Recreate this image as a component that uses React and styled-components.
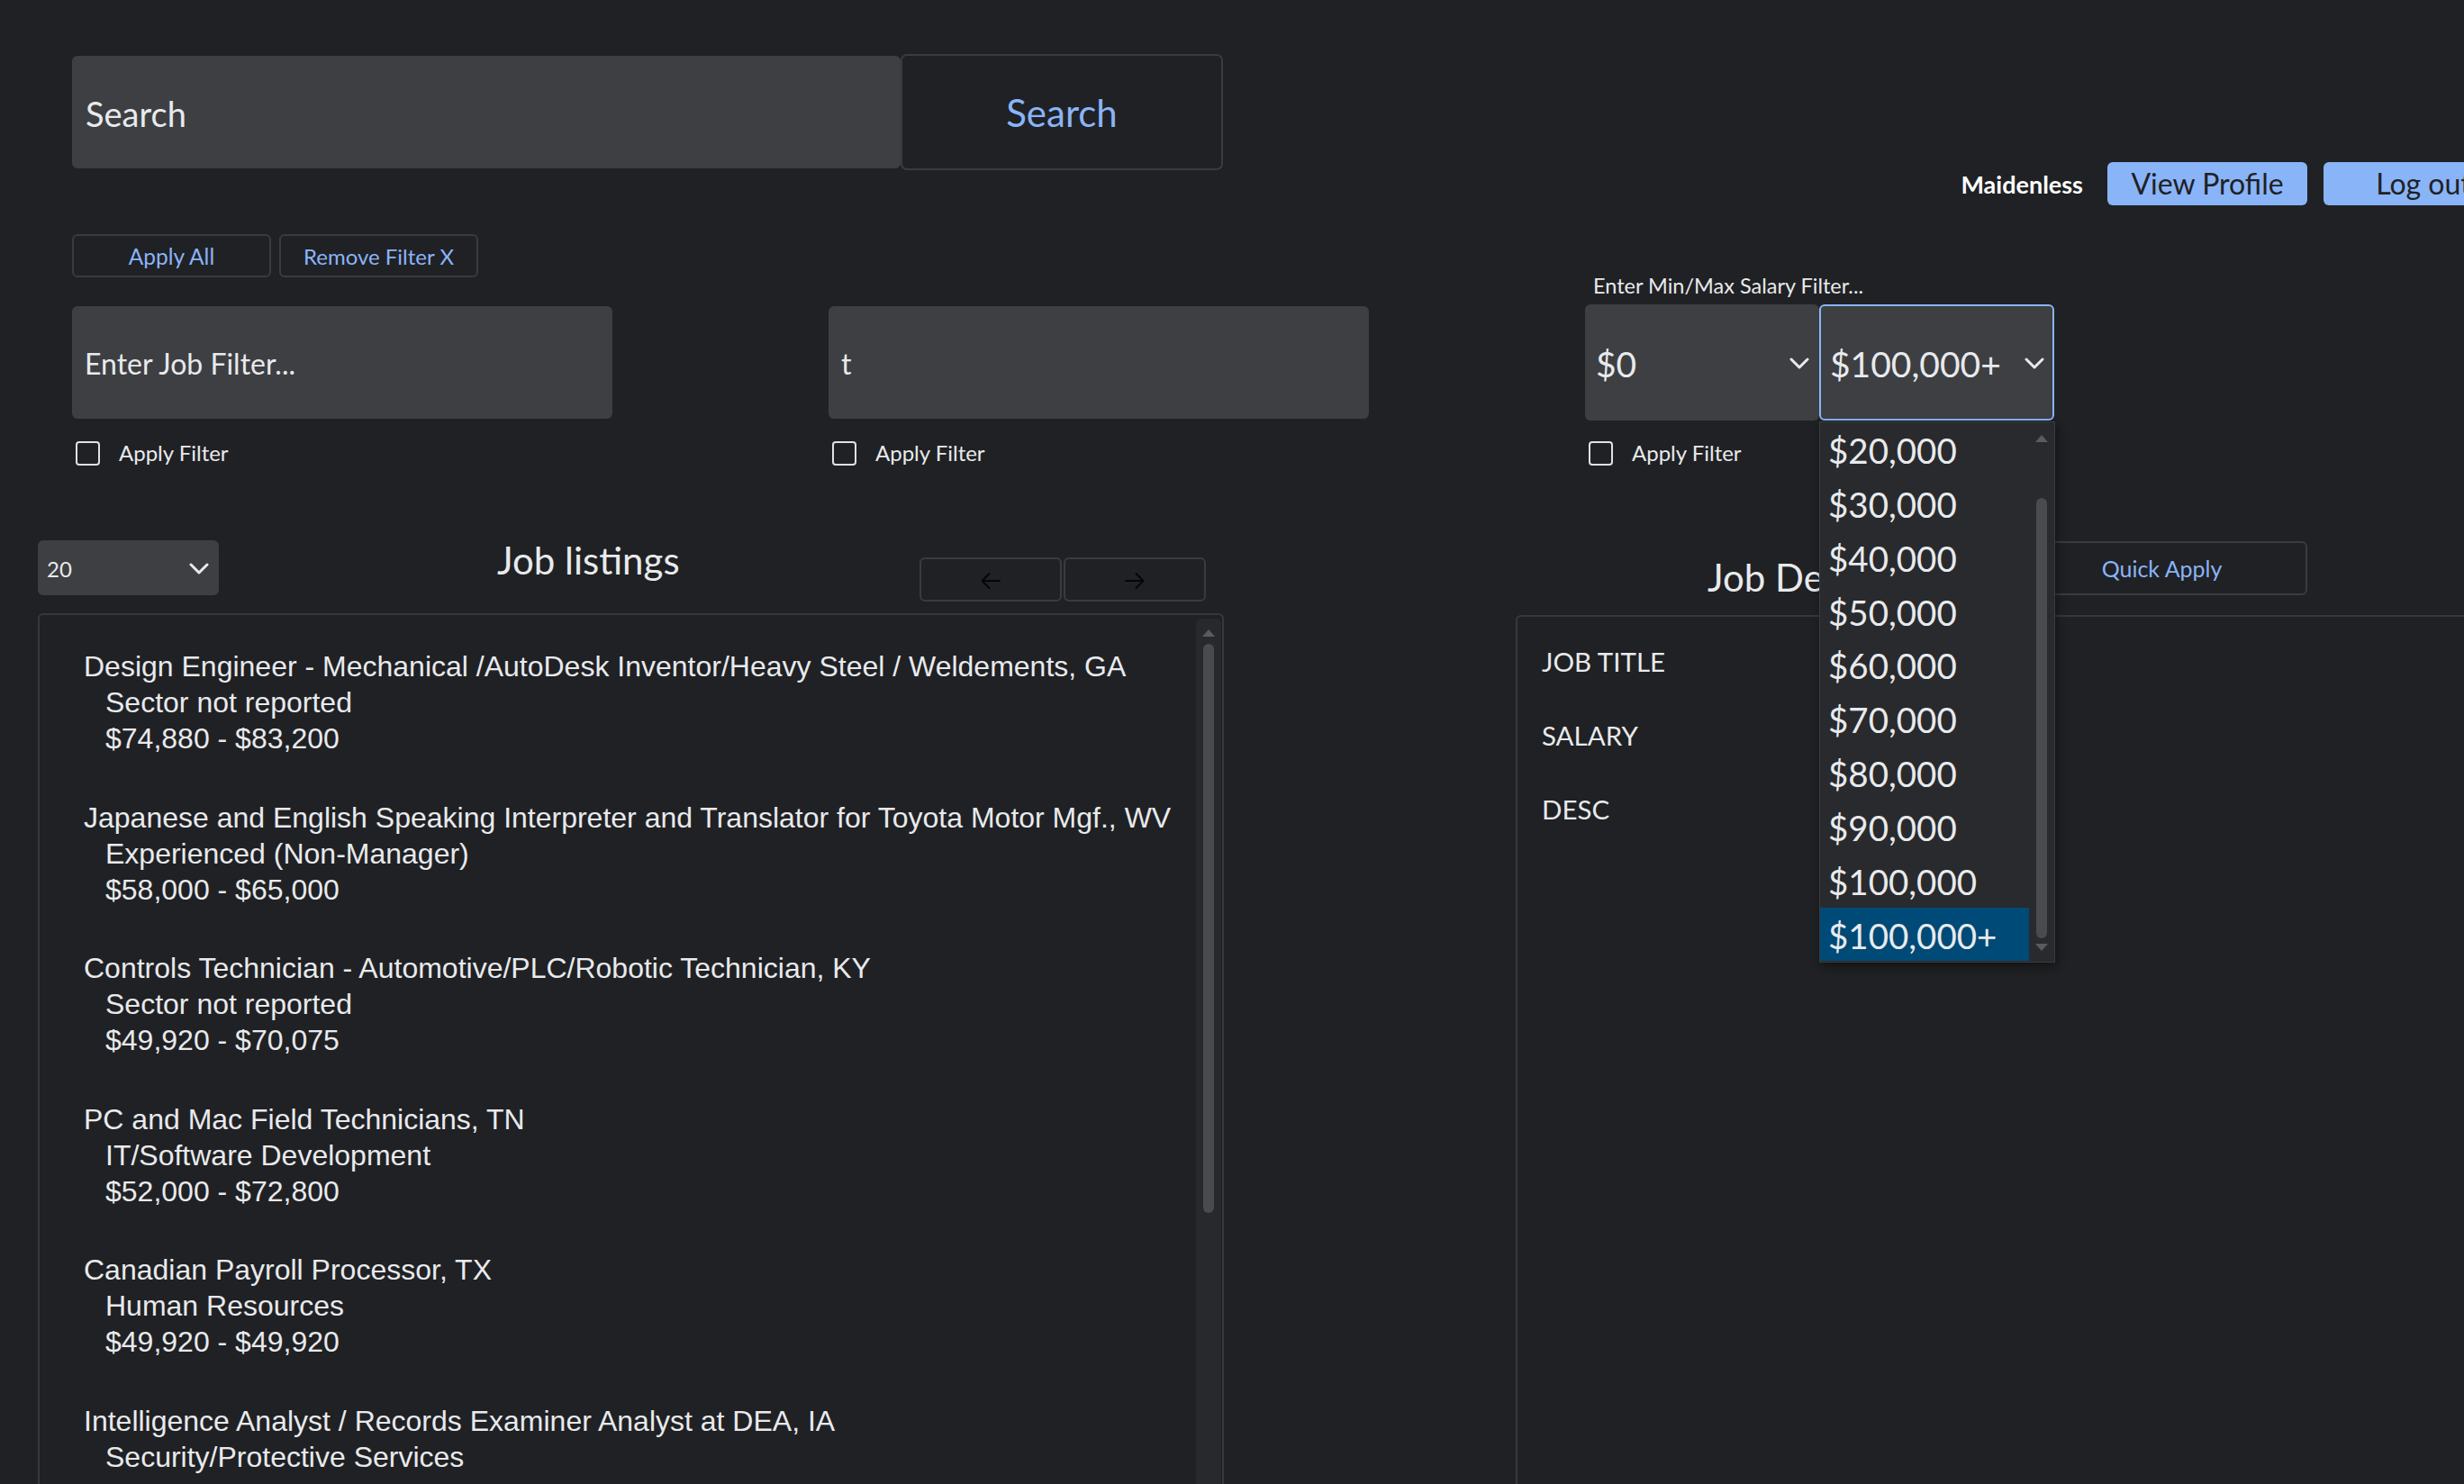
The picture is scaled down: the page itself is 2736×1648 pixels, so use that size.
import React from "react";
import styled, { createGlobalStyle } from "styled-components";

const UI = `Lato, "Noto Sans", sans-serif`;
const ARIAL = `"Liberation Sans", Arial, sans-serif`;

const GlobalStyle = createGlobalStyle`
  html, body { margin: 0; padding: 0; background: #202124; overflow: hidden; }
  body { font-family: ${UI}; color: #e8eaed; }
  * { box-sizing: border-box; }
`;

const Page = styled.div`
  width: 2802px;
  height: 1648px;
  overflow: hidden;
  font-family: ${UI};
  color: #e8eaed;
`;

/* ---------- header ---------- */
const Header = styled.header`
  display: flex;
  align-items: flex-start;
`;

const SearchForm = styled.form`
  display: flex;
  align-items: center;
  margin: 60px 0 0 80px;
`;

const SearchInput = styled.input`
  width: 920px;
  height: 125px;
  padding: 2px 15px 0;
  background: #3e3f42;
  border: none;
  border-radius: 6px;
  outline: none;
  color: #e8eaed;
  font: 400 38px ${UI};
  &::placeholder { color: #e8eaed; opacity: 1; }
`;

const SearchButton = styled.button`
  width: 358px;
  height: 129px;
  background: #202124;
  border: 2px solid #3a3b3e;
  border-radius: 7px;
  color: #8ab4f8;
  font: 400 42px ${UI};
`;

const UserNav = styled.nav`
  display: flex;
  align-items: center;
  margin: 180px 0 0 auto;
`;

const UserName = styled.span`
  font: 700 27px ${UI};
  color: #ffffff;
  margin-right: 27px;
`;

const NavButton = styled.button`
  width: 222px;
  height: 48px;
  background: #8ab4f8;
  color: #202124;
  border: none;
  border-radius: 6px;
  font: 400 32px ${UI};
  line-height: 48px;
  padding: 0;
  & + & { margin-left: 18px; }
`;

/* ---------- filters ---------- */
const FilterActions = styled.div`
  display: flex;
  gap: 9px;
  margin: 32px 0 0 80px;
`;

const OutlineButton = styled.button`
  width: ${(p) => p.$w || 221}px;
  height: ${(p) => p.$h || 48}px;
  padding: 0;
  background: transparent;
  border: 2px solid #3a3b3e;
  border-radius: 6px;
  color: #8ab4f8;
  font: 400 ${(p) => p.$fs || 24.5}px ${UI};
`;

const FilterGrid = styled.div`
  display: grid;
  grid-template-columns: 840px 840px 600px;
  align-items: end;
  margin: -3px 0 0 80px;
`;

const FilterColumn = styled.div`
  display: flex;
  flex-direction: column;
`;

const FilterInput = styled.input`
  width: 600px;
  height: 125px;
  margin-bottom: 2px;
  padding: 2px 14px 0;
  background: #3e3f42;
  border: none;
  border-radius: 6px;
  outline: none;
  color: #e8eaed;
  font: 400 32px ${UI};
  &::placeholder { color: #e8eaed; opacity: 1; }
`;

const CheckRow = styled.label`
  display: flex;
  align-items: center;
  height: 28px;
  margin-top: 22px;
  padding-left: 4px;
  font: 400 24px ${UI};
  line-height: 28px;
`;

const CheckBox = styled.span`
  width: 27px;
  height: 27px;
  border: 2.5px solid #dfe1e5;
  border-radius: 4px;
  margin-right: 21px;
`;

const SalaryLabel = styled.div`
  font: 400 23.5px ${UI};
  line-height: 24px;
  margin: 0 0 9px 9px;
`;

const SalaryRow = styled.div`
  display: flex;
`;

const SelectWrap = styled.div`
  position: relative;
`;

const SelectBox = styled.div`
  display: flex;
  align-items: center;
  justify-content: space-between;
  width: ${(p) => p.$w}px;
  height: ${(p) => p.$h}px;
  padding: 2px 9px 0 ${(p) => p.$pl || 10}px;
  background: #3e3f42;
  border: 2px solid ${(p) => (p.$focused ? "#8ab4f8" : "transparent")};
  border-radius: 6px;
  color: #e8eaed;
  font: 400 ${(p) => p.$fs}px ${UI};
`;

const Popup = styled.div`
  position: absolute;
  top: calc(100% + 1px);
  left: 0;
  width: 262px;
  height: 601px;
  display: flex;
  background: #292a2d;
  border: 1px solid #3a3b3e;
  box-shadow: 2px 4px 10px rgba(0, 0, 0, 0.45);
  z-index: 10;
`;

const OptionList = styled.ul`
  flex: 1;
  list-style: none;
  margin: 0;
  padding: 0;
`;

const Option = styled.li`
  height: 59.85px;
  overflow: hidden;
  padding-left: 9px;
  font: 400 38.5px ${UI};
  line-height: 63px;
  color: #e8eaed;
  background: ${(p) => (p.$selected ? "#004a77" : "transparent")};
`;

const ScrollTrack = styled.div`
  display: flex;
  flex-direction: column;
  align-items: center;
  width: 28px;
  padding: ${(p) => p.$pad || "12px 0 0"};
  background: ${(p) => p.$bg || "transparent"};
  border-radius: 6px 6px 0 0;
`;

const TriUp = styled.span`
  width: 0;
  height: 0;
  border-left: 7px solid transparent;
  border-right: 7px solid transparent;
  border-bottom: 8px solid #5a5b5e;
`;

const TriDown = styled(TriUp)`
  border-bottom: none;
  border-top: 8px solid #5a5b5e;
  margin-top: auto;
`;

const Thumb = styled.span`
  width: 12px;
  height: ${(p) => p.$h}px;
  margin-top: ${(p) => p.$mt}px;
  background: #4a4b4e;
  border-radius: 6px;
`;

/* ---------- main ---------- */
const Main = styled.main`
  display: flex;
  align-items: flex-start;
  margin-top: 79px;
`;

const LeftCol = styled.section`
  width: 1317px;
  margin-left: 42px;
`;

const ListHeader = styled.div`
  display: flex;
  align-items: flex-start;
  height: 85px;
`;

const Heading = styled.h2`
  margin: ${(p) => p.$m || "0"};
  font: 400 42px ${UI};
  line-height: 1.2;
  color: #e8eaed;
`;

const ArrowGroup = styled.div`
  display: flex;
  gap: 2px;
  margin: 23px 20px 0 auto;
`;

const ArrowButton = styled.button`
  display: flex;
  align-items: center;
  justify-content: center;
  width: 158px;
  height: 49px;
  padding: 2px 0 0;
  background: transparent;
  border: 2px solid #3a3b3e;
  border-radius: 6px;
`;

const ListBox = styled.div`
  display: flex;
  height: 1000px;
  border: 2px solid #37383b;
  border-bottom: none;
  border-radius: 6px 6px 0 0;
`;

const ListContent = styled.div`
  flex: 1;
  padding: 37px 0 0 49px;
  font: 400 32px ${ARIAL};
  line-height: 40px;
  color: #e8eaed;
`;

const JobItem = styled.div`
  margin-bottom: 47.5px;
`;

const JobLine = styled.div`
  padding-left: ${(p) => (p.$sub ? 24 : 0)}px;
  white-space: nowrap;
`;

const RightCol = styled.section`
  flex: 1;
  margin-left: 324px;
`;

const DetailsHeader = styled.div`
  display: flex;
  align-items: flex-start;
  height: 86.6px;
`;

const QuickApply = styled(OutlineButton)`
  margin: 5px 240px 0 auto;
`;

const DetailsBox = styled.div`
  height: 1000px;
  padding: 9px 27px 0;
  border: 2px solid #37383b;
  border-right: none;
  border-bottom: none;
  border-radius: 6px 0 0 0;
`;

const DetailRow = styled.div`
  height: 82px;
  font: 400 29.5px ${UI};
  line-height: 82px;
  color: #e8eaed;
`;

/* ---------- icons ---------- */
const Chevron = ({ w = 22 }) => (
  <svg width={w} height={Math.round(w * 0.6)} viewBox="0 0 22 13" fill="none" stroke="#e8eaed" strokeWidth="3" strokeLinecap="round" strokeLinejoin="round">
    <polyline points="2,2 11,11 20,2" />
  </svg>
);

const Arrow = ({ dir }) => (
  <svg width="22" height="18" viewBox="0 0 22 18" fill="none" stroke="#050505" strokeWidth="1.8" strokeLinecap="round" strokeLinejoin="round" style={{ transform: dir === "right" ? "scaleX(-1)" : "none" }}>
    <path d="M21 9H1.5M9.5 1L1.5 9l8 8" />
  </svg>
);

const jobs = [
  ["Design Engineer - Mechanical /AutoDesk Inventor/Heavy Steel / Weldements, GA", "Sector not reported", "$74,880 - $83,200"],
  ["Japanese and English Speaking Interpreter and Translator for Toyota Motor Mgf., WV", "Experienced (Non-Manager)", "$58,000 - $65,000"],
  ["Controls Technician - Automotive/PLC/Robotic Technician, KY", "Sector not reported", "$49,920 - $70,075"],
  ["PC and Mac Field Technicians, TN", "IT/Software Development", "$52,000 - $72,800"],
  ["Canadian Payroll Processor, TX", "Human Resources", "$49,920 - $49,920"],
  ["Intelligence Analyst / Records Examiner Analyst at DEA, IA", "Security/Protective Services", ""],
];

const salaryOptions = ["$20,000", "$30,000", "$40,000", "$50,000", "$60,000", "$70,000", "$80,000", "$90,000", "$100,000", "$100,000+"];

export default function App() {
  return (
    <Page>
      <GlobalStyle />
      <Header>
        <SearchForm onSubmit={(e) => e.preventDefault()}>
          <SearchInput placeholder="Search" />
          <SearchButton type="button">Search</SearchButton>
        </SearchForm>
        <UserNav>
          <UserName>Maidenless</UserName>
          <NavButton>View Profile</NavButton>
          <NavButton>Log out</NavButton>
        </UserNav>
      </Header>

      <FilterActions>
        <OutlineButton>Apply All</OutlineButton>
        <OutlineButton $fs={24}>Remove Filter X</OutlineButton>
      </FilterActions>

      <FilterGrid>
        <FilterColumn>
          <FilterInput placeholder="Enter Job Filter..." />
          <CheckRow><CheckBox />Apply Filter</CheckRow>
        </FilterColumn>
        <FilterColumn>
          <FilterInput defaultValue="t" />
          <CheckRow><CheckBox />Apply Filter</CheckRow>
        </FilterColumn>
        <FilterColumn>
          <SalaryLabel>Enter Min/Max Salary Filter...</SalaryLabel>
          <SalaryRow>
            <SelectBox $w={260} $h={129} $fs={39}>
              <span>$0</span>
              <Chevron />
            </SelectBox>
            <SelectWrap>
              <SelectBox $w={261} $h={129} $fs={39} $focused>
                <span>$100,000+</span>
                <Chevron />
              </SelectBox>
              <Popup>
                <OptionList>
                  {salaryOptions.map((o, i) => (
                    <Option key={o} $selected={i === salaryOptions.length - 1}>{o}</Option>
                  ))}
                </OptionList>
                <ScrollTrack $pad="14px 0 12px">
                  <TriUp />
                  <Thumb $mt={62} $h={489} />
                  <TriDown />
                </ScrollTrack>
              </Popup>
            </SelectWrap>
          </SalaryRow>
          <CheckRow><CheckBox />Apply Filter</CheckRow>
        </FilterColumn>
      </FilterGrid>

      <Main>
        <LeftCol>
          <ListHeader>
            <SelectBox $w={201} $h={61} $fs={24} $pl={8} style={{ marginTop: 4 }}>
              <span>20</span>
              <Chevron />
            </SelectBox>
            <Heading $m="1px 0 0 309px">Job listings</Heading>
            <ArrowGroup>
              <ArrowButton><Arrow dir="left" /></ArrowButton>
              <ArrowButton><Arrow dir="right" /></ArrowButton>
            </ArrowGroup>
          </ListHeader>
          <ListBox>
            <ListContent>
              {jobs.map((j) => (
                <JobItem key={j[0]}>
                  <JobLine>{j[0]}</JobLine>
                  <JobLine $sub>{j[1]}</JobLine>
                  <JobLine $sub>{j[2]}</JobLine>
                </JobItem>
              ))}
            </ListContent>
            <ScrollTrack $bg="#28292c" $pad="12px 0 0" style={{ marginTop: 4, marginRight: 1 }}>
              <TriUp />
              <Thumb $mt={8} $h={632} />
            </ScrollTrack>
          </ListBox>
        </LeftCol>

        <RightCol>
          <DetailsHeader>
            <Heading $m="20px 0 0 213px">Job Details</Heading>
            <QuickApply $w={323} $h={60} $fs={25}>Quick Apply</QuickApply>
          </DetailsHeader>
          <DetailsBox>
            <DetailRow>JOB TITLE</DetailRow>
            <DetailRow>SALARY</DetailRow>
            <DetailRow>DESC</DetailRow>
          </DetailsBox>
        </RightCol>
      </Main>
    </Page>
  );
}
